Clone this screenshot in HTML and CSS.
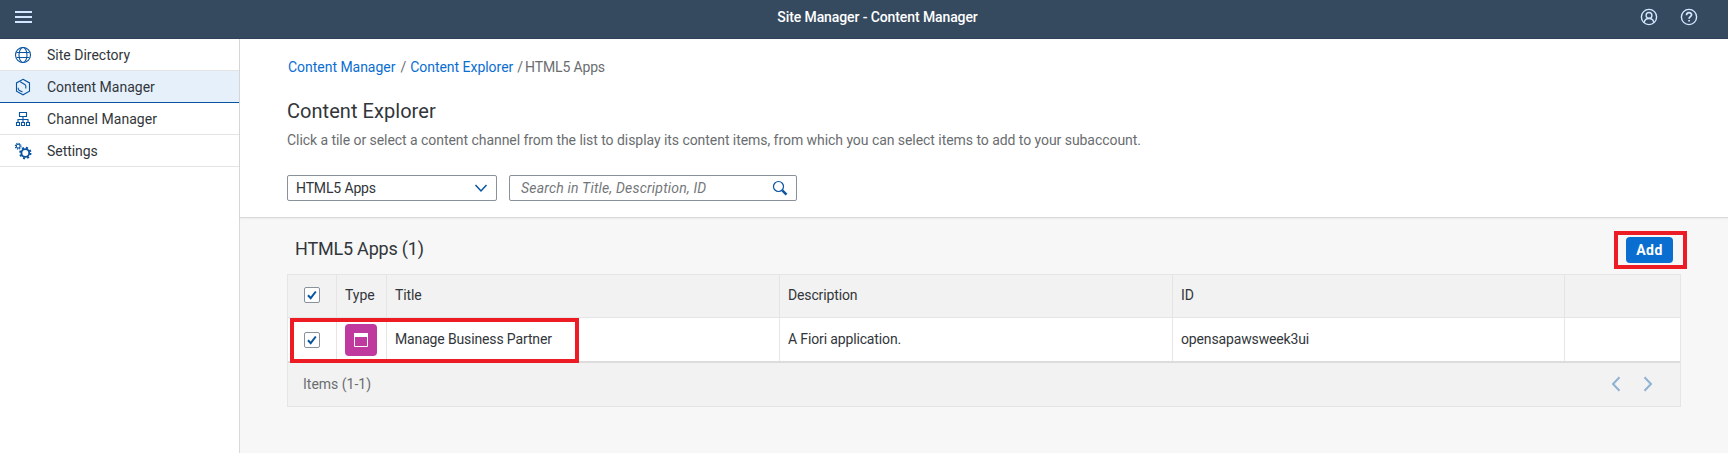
FILE: index.html
```
<!DOCTYPE html>
<html lang="en">
<head>
<meta charset="utf-8">
<title>Site Manager - Content Manager</title>
<link rel="stylesheet" href="styles.css">
</head>
<body>
<header class="shell">
  <svg class="menu" width="17" height="12" viewBox="0 0 17 12"><path d="M0 1h17M0 6h17M0 11h17"/></svg>
  <h1 class="shell-title">Site Manager - Content Manager</h1>
  <div class="shell-actions">
    <svg width="18" height="18" viewBox="0 0 18 18"><circle cx="9" cy="9" r="7.6"/><circle cx="9" cy="7.4" r="2.9"/><path d="M4.2 14.6c.3-2.6 2.2-4.1 4.8-4.1s4.500 1.500 4.800 4.100"/></svg>
    <svg width="18" height="18" viewBox="0 0 18 18"><circle cx="9" cy="9" r="7.600"/><path class="thick" d="M6.500 7.200c0-3.400 5.100-3.200 5.100-.4 0 1.900-2.500 1.900-2.500 4M9.100 12v1.600"/></svg>
  </div>
</header>
<div class="body">
  <nav class="side">
    <a class="item"><svg width="18" height="18" viewBox="0 0 18 18"><circle cx="9" cy="9" r="7.500"/><ellipse cx="9" cy="9" rx="4" ry="7.500"/><path d="M2.600 6.500h12.800M2.600 11.500h12.800"/></svg><span>Site Directory</span></a>
    <a class="item active"><svg width="18" height="18" viewBox="0 0 18 18"><path d="M9 1.300l6.500 3.600v8.300L9 16.800l-6.500-3.600V4.900zM6.200 3.800l4.600 2.600c.7.400 1 .9 1 1.700v2.400M4.200 9.800v1c0 .7.300 1.100.9 1.400l3.400 1.800"/></svg><span>Content Manager</span></a>
    <a class="item"><svg width="18" height="18" viewBox="0 0 18 18"><path d="M5.500 2.500h7v4h-7zM9 6.500V12M4 12V9.500h10V12M2.500 12.500h3v3h-3zM7.500 12.500h3v3h-3zM12.500 12.500h3v3h-3z"/></svg><span class="t-chm">Channel Manager</span></a>
    <a class="item"><svg width="18" height="18" viewBox="0 0 18 18"><circle cx="11.300" cy="11" r="3.900" stroke-width="1.800"/><circle cx="11.300" cy="11" r="5.300" stroke-width="1.800" stroke-dasharray="2.100 2.063"/><circle cx="4.200" cy="4.200" r="1.900" stroke-width="1.100"/><circle cx="4.200" cy="4.200" r="2.900" stroke-width="1.100" stroke-dasharray="1.200 1.078"/></svg><span class="t-set">Settings</span></a>
  </nav>
  <main class="content">
    <section class="top">
      <div class="crumbs"><a class="link">Content Manager</a><i class="sep">/</i><a class="link">Content Explorer</a><i class="sep sep2">/</i><span class="tight">HTML5 Apps</span></div>
      <h2 class="heading">Content Explorer</h2>
      <p class="desc">Click a tile or select a content channel from the list to display its content items, from which you can select items to add to your subaccount.</p>
      <div class="filters">
        <div class="select"><span class="tight">HTML5 Apps</span><svg width="14" height="9" viewBox="0 0 14 9"><path d="m1.500 1 5.500 6L12.500 1"/></svg></div>
        <div class="search"><span class="placeholder">Search in Title, Description, ID</span><svg width="16" height="16" viewBox="0 0 16 16"><circle cx="6.500" cy="6.500" r="5"/><path class="handle" d="m10.300 10.300 4.200 4.400"/></svg></div>
      </div>
    </section>
    <section class="bottom">
      <div class="toolbar"><h3 class="count">HTML5 Apps (1)</h3><div class="mark-add"><button class="add">Add</button></div></div>
      <div class="table">
        <div class="row head">
          <div class="cell check"><span class="box"><svg width="14" height="14" viewBox="0 0 14 14"><path d="m3 7.300 2.700 2.900L10.800 3.500"/></svg></span></div>
          <div class="cell">Type</div>
          <div class="cell"><span class="tight">Title</span></div>
          <div class="cell"><span class="tight">Description</span></div>
          <div class="cell">ID</div>
          <div class="cell"></div>
        </div>
        <div class="row data">
          <div class="cell check"><span class="box"><svg width="14" height="14" viewBox="0 0 14 14"><path d="m3 7.300 2.700 2.900L10.800 3.500"/></svg></span></div>
          <div class="cell"><span class="tile"><svg width="14" height="14" viewBox="0 0 14 14"><path class="frame" d="M.5.500h13v13H.5z"/><path class="bar" d="M0 0h14v4H0z"/></svg></span></div>
          <div class="cell"><span class="tight value">Manage Business Partner</span></div>
          <div class="cell"><span class="tight value">A Fiori application.</span></div>
          <div class="cell"><span class="tight value">opensapawsweek3ui</span></div>
          <div class="cell"></div>
          <div class="mark-row"></div>
        </div>
        <div class="foot"><span>Items (1-1)</span><div class="pager"><svg width="10" height="16" viewBox="0 0 10 16"><path d="M8.500 1.200 2 8l6.500 6.800"/></svg><svg width="10" height="16" viewBox="0 0 10 16"><path d="M1.500 1.200 8 8l-6.500 6.800"/></svg></div></div>
      </div>
    </section>
  </main>
</div>
</body>
</html>
```
FILE: styles.css
```
* { box-sizing: border-box; }
body { margin: 0; height: 453px; overflow: hidden; display: flex; flex-direction: column; background: #fff; color: #32363a; font: 14px/20px Roboto, "Noto Sans", sans-serif; letter-spacing: 0; }
h1, h2, h3, p { margin: 0; font-weight: 400; white-space: nowrap; }
svg { display: block; flex: none; fill: none; stroke: #0854a0; stroke-width: 1.1; }
span, a { white-space: nowrap; }
.tight { letter-spacing: -.14px; }
.shell { height: 39px; flex: none; background: #354a5f; border-bottom: 1px solid #2f4259; display: grid; grid-template-columns: 1fr auto 1fr; padding: 7px 30px 0 15px; align-items: start; }
.shell svg { stroke: #d1e8ff; stroke-width: 1.400; }
.shell .menu { stroke-width: 2; margin-top: 4px; }
.shell-title { color: #fff; font-size: 14px; font-weight: 500; line-height: 20px; letter-spacing: -.1px; margin-left: 43px; margin-right: 1px; }
.shell-actions { display: flex; justify-content: flex-end; gap: 22px; padding-top: 1px; }
.shell .thick { stroke-width: 1.700; }
.body { flex: 1; display: flex; min-height: 0; }
.side { width: 240px; border-right: 1px solid #d9d9d9; background: #fff; }
.item { height: 32px; display: flex; align-items: center; gap: 15px; padding: 1px 0 0 14px; border-bottom: 1px solid #e4e4e4; }
.active { background: #e5f0fa; border-bottom-color: #0854a0; }
.t-chm { letter-spacing: .04px; }
.t-set { letter-spacing: -.05px; }
.content { flex: 1; display: flex; flex-direction: column; background: #f7f7f7; }
.top { height: 179px; background: #fff; border-bottom: 1px solid #d9d9d9; box-shadow: 0 1px 2px rgba(0,0,0,.05); padding: 18px 48px 0 47px; }
.crumbs { display: flex; color: #6a6d70; padding-left: 1px; }
.link { color: #0a6ed1; letter-spacing: -.03px; }
.sep { font-style: normal; margin: 0 4px 0 5px; }
.sep2 { margin: 0 2px 0 4px; }
.heading { font-size: 20px; line-height: 26px; letter-spacing: .05px; margin-top: 21px; }
.desc { color: #6a6d70; letter-spacing: -.052px; margin-top: 6px; }
.filters { display: flex; gap: 12px; margin-top: 25px; }
.select, .search { height: 26px; border: 1px solid #89919a; border-radius: 2px; background: #fff; display: flex; align-items: center; justify-content: space-between; }
.select { width: 210px; padding: 0 8px; }
.select svg { stroke-width: 1.500; }
.search { width: 288px; padding: 0 8px 0 11px; }
.placeholder { font-style: italic; color: #74777a; letter-spacing: .2px; }
.search svg { stroke-width: 1.200; }
.search .handle { stroke-width: 2.400; }
.bottom { padding: 13px 41px 0 47px; }
.toolbar { display: flex; justify-content: space-between; height: 43px; padding-left: 8px; }
.count { font-size: 18px; line-height: 24px; letter-spacing: -.2px; margin-top: 6px; }
.mark-add { width: 73px; height: 38px; border: 4px solid #ed1c24; padding: 2px 0 0 8px; }
.add { display: block; width: 47px; height: 26px; border: 0; border-radius: 4px; background: #0a6ed1; color: #fff; font: 700 14px/26px Roboto, sans-serif; padding: 0; letter-spacing: .5px; }
.table { width: 1394px; border: 1px solid #e5e5e5; }
.row { display: grid; grid-template-columns: 49px 50px 393px 393px 392px 1fr; height: 43px; position: relative; }
.cell { display: flex; align-items: center; padding-left: 8px; border-right: 1px solid #e5e5e5; }
.cell:nth-child(6) { border-right: 0; }
.head { background: #f2f2f2; border-bottom: 1px solid #e5e5e5; }
.head .cell { padding-bottom: 2px; }
.data { background: #fff; height: 45px; border-bottom: 2px solid #dcdcdc; }
.data .value { padding-bottom: 1px; }
.cell.check { padding-left: 16px; }
.box { width: 16px; height: 16px; background: #fff; border: 1px solid #89919a; border-radius: 2px; }
.box svg { stroke-width: 2; }
.tile { width: 32px; height: 32px; border-radius: 4px; background: #c0399f; display: flex; align-items: center; justify-content: center; }
.tile .frame { stroke: #fff; stroke-width: 1; }
.tile .bar { fill: #fff; stroke: none; }
.mark-row { position: absolute; left: 2px; top: 0; width: 289px; height: 45px; border: 4px solid #ed1c24; }
.foot { height: 43px; background: #f2f2f2; color: #6a6d70; display: flex; align-items: center; justify-content: space-between; padding: 0 27px 1px 15px; }
.pager { display: flex; gap: 22px; }
.pager svg { stroke: #8fb2d3; stroke-width: 2; }
```
